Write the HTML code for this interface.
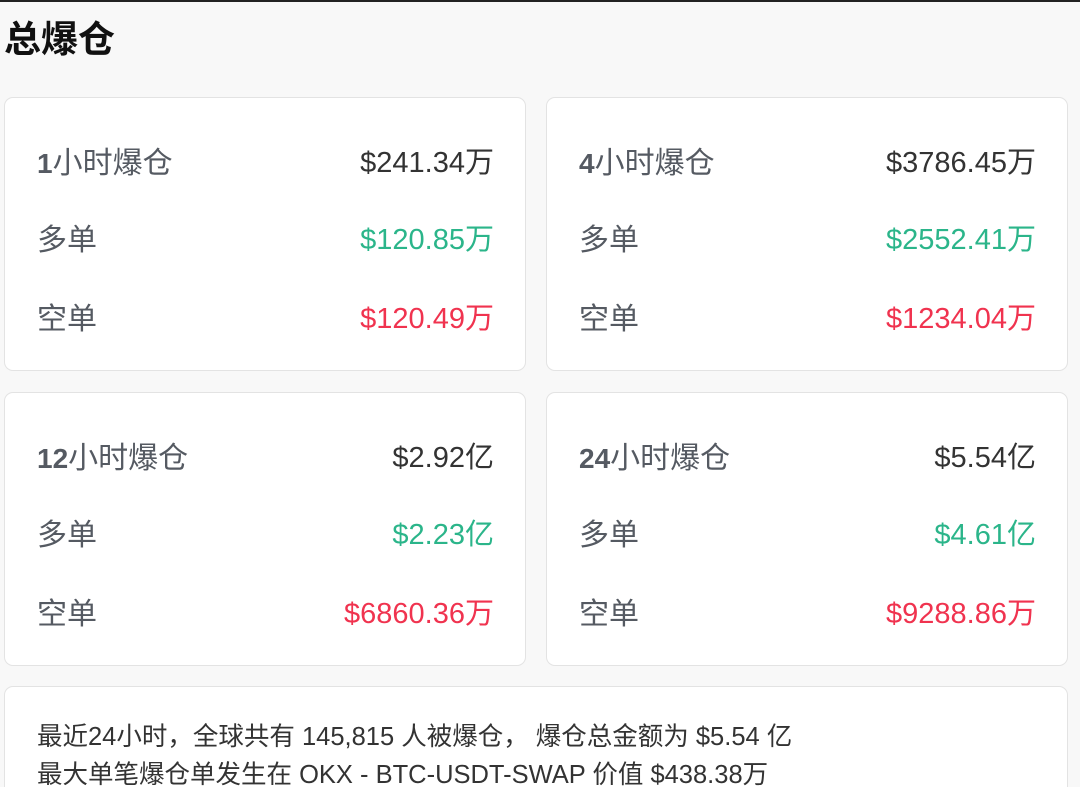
<!DOCTYPE html>
<html><head><meta charset="utf-8"><style>
*{margin:0;padding:0;box-sizing:border-box}
html,body{width:1080px;height:787px;overflow:hidden}
body{background:#f8f8f8;font-family:"Liberation Sans","Noto Sans CJK SC",sans-serif;position:relative;border-top:2px solid #222}
h1{position:absolute;left:4px;top:10px;font-size:37px;font-weight:bold;color:#111;font-family:"Noto Sans CJK SC",sans-serif;line-height:48px}
.card{position:absolute;background:#fff;border:1px solid #e3e3e3;border-radius:9px}
.row{position:absolute;left:32px;right:31px;height:40px;display:flex;justify-content:space-between;align-items:center}
.l{color:#555a62;font-size:30px}
.l b{font-weight:bold;font-family:"Liberation Sans",sans-serif;font-size:28px}
.v{color:#333;font-size:29px}
.g{color:#2bb58a}.r{color:#f0334f}
.txt{position:absolute;left:32px;font-size:25.5px;color:#333;line-height:38px;top:31px;white-space:nowrap}
</style></head><body>
<h1>总爆仓</h1>
<div class="card" style="left:4px;top:95px;width:522px;height:274px">
<div class="row" style="top:42px"><span class="l"><b>1</b>小时爆仓</span><span class="v">$241.34万</span></div>
<div class="row" style="top:119px"><span class="l">多单</span><span class="v g">$120.85万</span></div>
<div class="row" style="top:198px"><span class="l">空单</span><span class="v r">$120.49万</span></div>
</div>
<div class="card" style="left:546px;top:95px;width:522px;height:274px">
<div class="row" style="top:42px"><span class="l"><b>4</b>小时爆仓</span><span class="v">$3786.45万</span></div>
<div class="row" style="top:119px"><span class="l">多单</span><span class="v g">$2552.41万</span></div>
<div class="row" style="top:198px"><span class="l">空单</span><span class="v r">$1234.04万</span></div>
</div>
<div class="card" style="left:4px;top:390px;width:522px;height:274px">
<div class="row" style="top:42px"><span class="l"><b>12</b>小时爆仓</span><span class="v">$2.92亿</span></div>
<div class="row" style="top:119px"><span class="l">多单</span><span class="v g">$2.23亿</span></div>
<div class="row" style="top:198px"><span class="l">空单</span><span class="v r">$6860.36万</span></div>
</div>
<div class="card" style="left:546px;top:390px;width:522px;height:274px">
<div class="row" style="top:42px"><span class="l"><b>24</b>小时爆仓</span><span class="v">$5.54亿</span></div>
<div class="row" style="top:119px"><span class="l">多单</span><span class="v g">$4.61亿</span></div>
<div class="row" style="top:198px"><span class="l">空单</span><span class="v r">$9288.86万</span></div>
</div>
<div class="card" style="left:4px;top:684px;width:1064px;height:140px">
<div class="txt">最近24小时，全球共有 145,815 人被爆仓， 爆仓总金额为 $5.54 亿<br>最大单笔爆仓单发生在 OKX - BTC-USDT-SWAP 价值 $438.38万</div>
</div>
</body></html>
